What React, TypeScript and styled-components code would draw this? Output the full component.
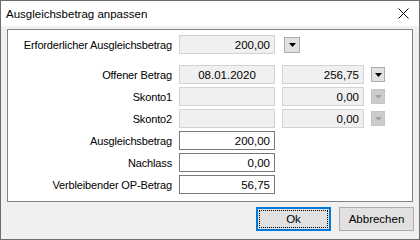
import styled, { createGlobalStyle, css } from 'styled-components'

const GlobalStyle = createGlobalStyle`
    html, body {
        margin: 0;
        padding: 0;
        overflow: hidden;
        background: #f0f0f0;
    }
    * {
        box-sizing: border-box;
    }
`

const FONT = `'Liberation Sans', Arial, sans-serif`

const Window = styled.div`
    width: 420px;
    height: 240px;
    border: 1px solid #6d6d6d;
    background: #f0f0f0;
    display: flex;
    flex-direction: column;
    font-family: ${FONT};
    font-size: 11px;
    color: #000;
`

const TitleBar = styled.div`
    height: 25px;
    flex: none;
    background: #fff;
    display: flex;
    align-items: center;
    justify-content: space-between;
    padding: 0 10px 0 5px;
`

const Title = styled.span`
    font-size: 11.5px;
`

const Body = styled.div`
    flex: 1;
    display: flex;
    flex-direction: column;
    padding: 3px 6px 0 6px;
`

const Panel = styled.div`
    background: #fff;
    border: 1px solid #828282;
    padding: 5px 0 7px 0;
    display: flex;
    flex-direction: column;
    gap: 3px;
`

const Row = styled.div<{ $spaced?: boolean }>`
    display: grid;
    grid-template-columns: 164px 96px 82px 14px;
    column-gap: 7px;
    height: 19px;
    align-items: center;
    margin-bottom: ${({ $spaced }) => ($spaced ? '8px' : '0')};
`

const Label = styled.span`
    text-align: right;
    white-space: nowrap;
    letter-spacing: -0.15px;
`

const Field = styled.div<{ $editable?: boolean; $align?: 'left' | 'right' | 'center' }>`
    height: 19px;
    display: flex;
    align-items: center;
    justify-content: ${({ $align }) =>
        $align === 'center' ? 'center' : $align === 'left' ? 'flex-start' : 'flex-end'};
    padding: 0 4px;
    white-space: nowrap;
    font-size: 11.5px;
    ${({ $editable }) =>
        $editable
            ? css`
                  background: #fff;
                  border: 1px solid #7a7a7a;
              `
            : css`
                  background: #f0f0f0;
                  border: 1px solid #d2d2d2;
              `}
`

const DropButton = styled.div<{ $disabled?: boolean; $wide?: boolean }>`
    width: ${({ $wide }) => ($wide ? '16px' : '14px')};
    height: ${({ $wide }) => ($wide ? '16px' : '15px')};
    margin-left: ${({ $wide }) => ($wide ? '2px' : '0')};
    display: flex;
    align-items: center;
    justify-content: center;
    background: ${({ $disabled }) => ($disabled ? '#cccccc' : '#e1e1e1')};
    border: 1px solid ${({ $disabled }) => ($disabled ? '#c4c4c4' : '#adadad')};
    color: ${({ $disabled }) => ($disabled ? '#a3a3a3' : '#000')};
`

const ButtonRow = styled.div`
    display: flex;
    justify-content: flex-end;
    gap: 8px;
    padding: 5px 0 0 0;
    margin-right: -1px;
`

const Button = styled.button<{ $default?: boolean }>`
    position: relative;
    width: 75px;
    height: 24px;
    padding: 0;
    font-family: ${FONT};
    font-size: 11.5px;
    color: #000;
    background: #e1e1e1;
    border: ${({ $default }) => ($default ? '2px solid #0078d7' : '1px solid #adadad')};

    ${({ $default }) =>
        $default &&
        css`
            &::after {
                content: '';
                position: absolute;
                inset: 1px;
                border: 1px dotted #000;
            }
        `}
`

function Caret() {
    return (
        <svg width="7" height="4" viewBox="0 0 7 4">
            <path d="M0 0 H7 L3.5 4 Z" fill="currentColor" />
        </svg>
    )
}

function CloseIcon() {
    return (
        <svg width="11" height="11" viewBox="0 0 11 11">
            <path d="M0.5 0.5 L10.5 10.5 M10.5 0.5 L0.5 10.5" stroke="#000" strokeWidth="1" />
        </svg>
    )
}

const Empty = styled.span``

export default function App() {
    return (
        <>
            <GlobalStyle />
            <Window>
                <TitleBar>
                    <Title>Ausgleichsbetrag anpassen</Title>
                    <CloseIcon />
                </TitleBar>
                <Body>
                    <Panel>
                        <Row $spaced>
                            <Label>Erforderlicher Ausgleichsbetrag</Label>
                            <Field>200,00</Field>
                            <DropButton $wide>
                                <Caret />
                            </DropButton>
                            <Empty />
                        </Row>
                        <Row>
                            <Label>Offener Betrag</Label>
                            <Field $align="center">08.01.2020</Field>
                            <Field>256,75</Field>
                            <DropButton>
                                <Caret />
                            </DropButton>
                        </Row>
                        <Row>
                            <Label>Skonto1</Label>
                            <Field />
                            <Field>0,00</Field>
                            <DropButton $disabled>
                                <Caret />
                            </DropButton>
                        </Row>
                        <Row>
                            <Label>Skonto2</Label>
                            <Field />
                            <Field>0,00</Field>
                            <DropButton $disabled>
                                <Caret />
                            </DropButton>
                        </Row>
                        <Row>
                            <Label>Ausgleichsbetrag</Label>
                            <Field $editable>200,00</Field>
                        </Row>
                        <Row>
                            <Label>Nachlass</Label>
                            <Field $editable>0,00</Field>
                        </Row>
                        <Row>
                            <Label>Verbleibender OP-Betrag</Label>
                            <Field $editable>56,75</Field>
                        </Row>
                    </Panel>
                    <ButtonRow>
                        <Button $default>Ok</Button>
                        <Button>Abbrechen</Button>
                    </ButtonRow>
                </Body>
            </Window>
        </>
    )
}
